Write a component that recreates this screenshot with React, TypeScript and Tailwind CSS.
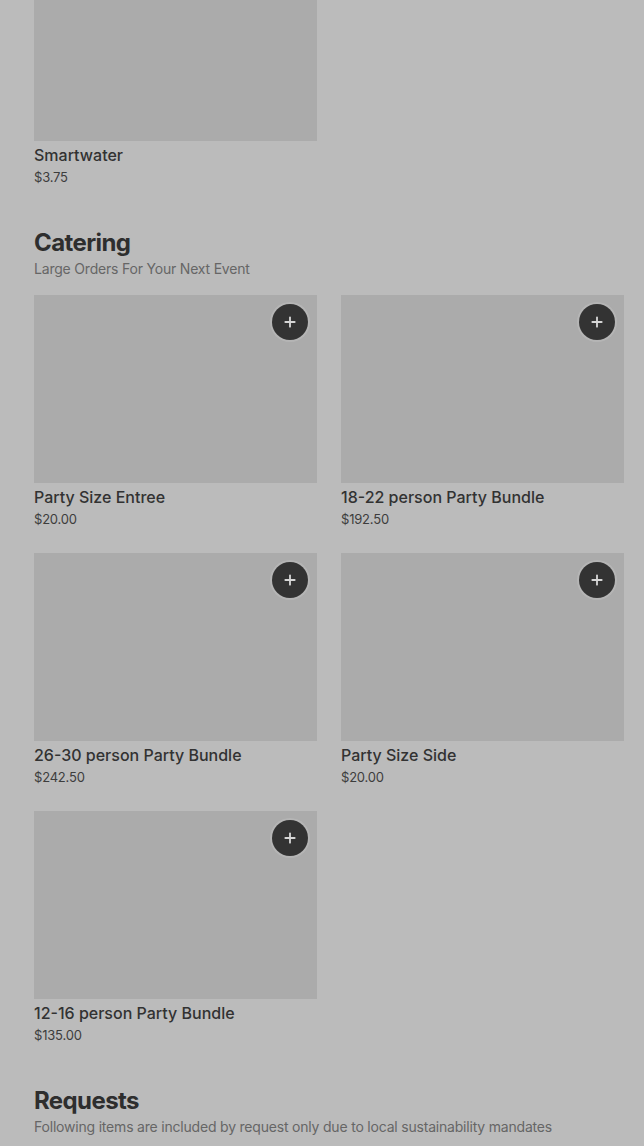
import { Plus } from "lucide-react";

type Item = { name: string; price: string };

const catering: Item[] = [
  { name: "Party Size Entree", price: "$20.00" },
  { name: "18-22 person Party Bundle", price: "$192.50" },
  { name: "26-30 person Party Bundle", price: "$242.50" },
  { name: "Party Size Side", price: "$20.00" },
  { name: "12-16 person Party Bundle", price: "$135.00" },
];

function ItemCard({ item }: { item: Item }) {
  return (
    <div className="flex flex-col">
      <div className="relative h-[188px] bg-[#ababab]">
        <button className="absolute right-[9px] top-[9px] flex h-9 w-9 items-center justify-center rounded-full bg-[#333333] text-[#d6d6d6] shadow-[0_0_0_2px_rgba(200,200,200,0.35)]">
          <Plus size={16} strokeWidth={2.75} />
        </button>
      </div>
      <div className="mt-[2px] text-[16px] font-medium leading-6 text-[#323232]">{item.name}</div>
      <div className="text-[13px] leading-5 tracking-[-0.2px] text-[#3d3d3d]">{item.price}</div>
    </div>
  );
}

function SectionHeader({ title, subtitle }: { title: string; subtitle: string }) {
  return (
    <div className="mb-4">
      <h2 className="text-[24px] font-bold leading-8 tracking-[-0.6px] text-[#2e2e2e]">{title}</h2>
      <p className="text-[14px] leading-5 tracking-[-0.2px] text-[#666666]">{subtitle}</p>
    </div>
  );
}

export default function App() {
  return (
    <div
      className="h-[1146px] overflow-hidden bg-[#bbbbbb] pl-[34px] pr-[20px]"
      style={{ fontFamily: "Inter, 'Noto Sans', sans-serif" }}
    >
      {/* Drinks (scrolled) */}
      <div className="-mt-[47px] grid grid-cols-2 gap-x-6">
        <ItemCard item={{ name: "Smartwater", price: "$3.75" }} />
      </div>

      {/* Catering */}
      <div className="mt-10">
        <SectionHeader title="Catering" subtitle="Large Orders For Your Next Event" />
        <div className="grid grid-cols-2 gap-x-6 gap-y-6">
          {catering.map((item) => (
            <ItemCard key={item.name} item={item} />
          ))}
        </div>
      </div>

      {/* Requests */}
      <div className="mt-10">
        <SectionHeader
          title="Requests"
          subtitle="Following items are included by request only due to local sustainability mandates"
        />
      </div>
    </div>
  );
}
